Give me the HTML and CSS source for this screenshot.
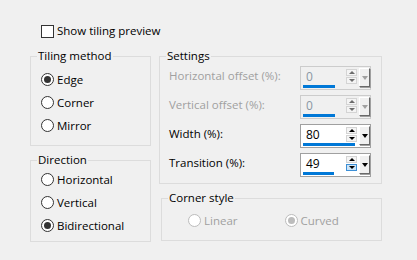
FILE: index.html
```html
<!DOCTYPE html>
<html lang="en">
<head>
  <meta charset="UTF-8">
  <meta name="viewport" content="width=device-width, initial-scale=1.0">
  <title>Tiling</title>
  <link rel="stylesheet" href="styles.css">
</head>
<body>
  <div class="dialog">
    <div class="check-row">
      <span class="check"></span>
      <span>Show tiling preview</span>
    </div>

    <div class="columns">
      <div class="col">
        <fieldset class="group tiling">
          <legend>Tiling method</legend>
          <div class="option"><span class="radio checked"></span>Edge</div>
          <div class="option"><span class="radio"></span>Corner</div>
          <div class="option"><span class="radio"></span>Mirror</div>
        </fieldset>

        <fieldset class="group direction">
          <legend>Direction</legend>
          <div class="option"><span class="radio"></span>Horizontal</div>
          <div class="option"><span class="radio"></span>Vertical</div>
          <div class="option"><span class="radio checked"></span>Bidirectional</div>
        </fieldset>
      </div>

      <div class="col">
        <fieldset class="group settings">
          <legend>Settings</legend>
          <div class="field disabled">
            <span class="field-label">Horizontal offset (%):</span>
            <div class="spin">
              <span class="spin-value">0</span>
              <span class="spin-arrows"><span class="arrow up"></span><span class="arrow down"></span></span>
              <span class="spin-drop"></span>
              <span class="spin-bar" style="width: 32px"></span>
            </div>
          </div>
          <div class="field disabled">
            <span class="field-label">Vertical offset (%):</span>
            <div class="spin">
              <span class="spin-value">0</span>
              <span class="spin-arrows"><span class="arrow up"></span><span class="arrow down"></span></span>
              <span class="spin-drop"></span>
              <span class="spin-bar" style="width: 32px"></span>
            </div>
          </div>
          <div class="field">
            <span class="field-label">Width (%):</span>
            <div class="spin">
              <span class="spin-value">80</span>
              <span class="spin-arrows"><span class="arrow up"></span><span class="arrow down"></span></span>
              <span class="spin-drop"></span>
              <span class="spin-bar" style="width: 52px"></span>
            </div>
          </div>
          <div class="field">
            <span class="field-label">Transition (%):</span>
            <div class="spin">
              <span class="spin-value">49</span>
              <span class="spin-arrows"><span class="arrow up"></span><span class="arrow down hover"></span></span>
              <span class="spin-drop"></span>
              <span class="spin-bar" style="width: 31px"></span>
            </div>
          </div>
        </fieldset>

        <fieldset class="group corner">
          <legend>Corner style</legend>
          <div class="corner-options">
            <div class="option disabled"><span class="radio"></span>Linear</div>
            <div class="option disabled"><span class="radio checked"></span>Curved</div>
          </div>
        </fieldset>
      </div>
    </div>
  </div>
</body>
</html>
```

FILE: styles.css
```css
body {
  margin: 0;
  background-color: #f0f0f0;
  font-family: "Open Sans", "Noto Sans", sans-serif;
  font-size: 11.5px;
  line-height: 16px;
  color: #000;
}

.dialog {
  padding: 23px 0 0 30px;
  width: 352px;
}

/* checkbox row */
.check-row {
  display: flex;
  align-items: center;
  gap: 3px;
  margin-left: 11px;
  height: 16px;
}

.check {
  width: 13px;
  height: 13px;
  box-sizing: border-box;
  border: 1px solid #333;
  background-color: #fff;
}

.columns {
  display: grid;
  grid-template-columns: 121px 223px;
  column-gap: 8px;
  margin-top: 9px;
}

.col {
  display: flex;
  flex-direction: column;
}

/* group boxes */
.group {
  margin: 0;
  min-width: 0;
  border: 1px solid #dcdcdc;
  padding: 0 10px 0 6px;
}

.group legend {
  padding: 0 1px;
  line-height: 16px;
}

.tiling {
  padding-top: 4px;
  padding-bottom: 8px;
}

.direction {
  margin-top: 6px;
  padding-top: 0;
  padding-bottom: 4px;
}

.settings {
  padding-top: 2px;
  padding-bottom: 6px;
}

.corner {
  margin: 6px 0 0 2px;
  padding-top: 3px;
  padding-bottom: 8px;
}

/* radio options */
.option {
  display: flex;
  align-items: center;
  gap: 3px;
  height: 23px;
  margin-left: 4px;
}

.radio {
  width: 13px;
  height: 13px;
  box-sizing: border-box;
  border: 1px solid #333;
  border-radius: 50%;
  background-color: #fff;
  display: flex;
  align-items: center;
  justify-content: center;
}

.radio.checked::after {
  content: "";
  width: 7px;
  height: 7px;
  border-radius: 50%;
  background-color: #333;
}

.option.disabled {
  color: #a0a0a0;
}

.option.disabled .radio {
  border-color: #bcbcbc;
}

.option.disabled .radio.checked::after {
  background-color: #bcbcbc;
}

.corner-options {
  display: flex;
  margin-left: 20px;
  gap: 47px;
}

.corner-options .option {
  margin-left: 0;
}

/* settings fields */
.field {
  display: flex;
  justify-content: space-between;
  align-items: flex-start;
  padding-left: 3px;
  margin-bottom: 5px;
}

.field:last-child {
  margin-bottom: 0;
}

.field-label {
  padding-top: 2px;
}

.field.disabled .field-label {
  color: #a0a0a0;
}

.spin {
  display: grid;
  grid-template-columns: 1fr 11px 13px;
  grid-template-rows: 17px 3px;
  width: 71px;
  height: 24px;
  box-sizing: border-box;
  padding: 1px 0 1px 2px;
  border: 1px solid #a0a0a0;
  background-color: #fff;
}

.field.disabled .spin {
  border-color: #cccccc;
  background-color: #f0f0f0;
}

.spin-value {
  grid-column: 1;
  grid-row: 1;
  padding-left: 3px;
  line-height: 18px;
  font-size: 12px;
}

.field.disabled .spin-value {
  color: #8a96a3;
}

.spin-arrows {
  grid-column: 2;
  grid-row: 1;
  display: flex;
  flex-direction: column;
  gap: 1px;
  padding-top: 1px;
}

.arrow {
  height: 7px;
  box-sizing: border-box;
  border: 1px solid #d4d4d4;
  background-color: #f4f4f4;
  display: flex;
  align-items: center;
  justify-content: center;
}

.arrow::after {
  content: "";
  border-left: 3px solid transparent;
  border-right: 3px solid transparent;
}

.arrow.up::after {
  border-bottom: 3px solid #000;
}

.arrow.down::after {
  border-top: 3px solid #000;
}

.arrow.down.hover {
  background-color: #cce4f7;
  border-color: #3c8fd6;
}

.field.disabled .arrow.up::after {
  border-bottom-color: #6d6d6d;
}

.field.disabled .arrow.down::after {
  border-top-color: #6d6d6d;
}

.spin-drop {
  grid-column: 3;
  grid-row: 1 / 3;
  margin: 0 0 1px 2px;
  background-color: #f0f0f0;
  border-top: 1px solid #fff;
  border-left: 1px solid #fff;
  border-right: 1px solid #696969;
  border-bottom: 1px solid #696969;
  box-shadow: 1px 1px 0 #a0a0a0;
  display: flex;
  align-items: center;
  justify-content: center;
}

.spin-drop::after {
  content: "";
  border-left: 3px solid transparent;
  border-right: 3px solid transparent;
  border-top: 4px solid #000;
}

.field.disabled .spin-drop::after {
  border-top-color: #a0a0a0;
}

.spin-bar {
  grid-column: 1 / 3;
  grid-row: 2;
  height: 3px;
  background-color: #0078d7;
}
```
